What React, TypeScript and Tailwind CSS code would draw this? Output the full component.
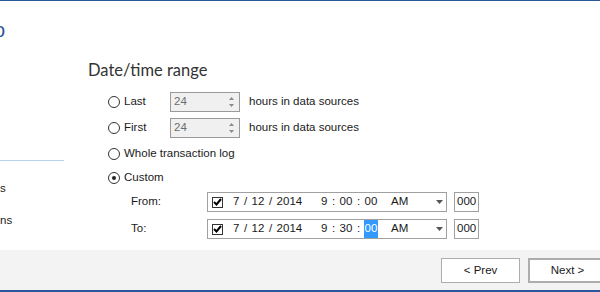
import React from "react";

const font = { fontFamily: '"Liberation Sans", Arial, sans-serif' };

function Radio({ checked, label, wide }: { checked?: boolean; label: string; wide?: boolean }) {
  return (
    <div className={wide ? "flex items-center" : "flex items-center w-[62px] shrink-0"}>
      <span className="w-[12px] h-[12px] shrink-0 rounded-full border border-[#333] bg-white flex items-center justify-center">
        {checked && <span className="w-[4px] h-[4px] rounded-full bg-[#222]" />}
      </span>
      <span className="ml-[4px] whitespace-nowrap">{label}</span>
    </div>
  );
}

function SpinBox() {
  return (
    <div className="flex w-[70px] h-[20px] shrink-0 border border-[#9a9a9a] bg-[#f0f0f0]">
      <div className="flex-1 pl-[3px] flex items-center text-[#6d6d6d]">24</div>
      <div className="w-[16px] flex flex-col items-center justify-center gap-[4px]">
        <svg width="5" height="3" viewBox="0 0 5 3">
          <path d="M0 3 L2.5 0 L5 3 Z" fill="#8a8a8a" />
        </svg>
        <svg width="5" height="3" viewBox="0 0 5 3">
          <path d="M0 0 L2.5 3 L5 0 Z" fill="#8a8a8a" />
        </svg>
      </div>
    </div>
  );
}

function DateTimeBox({ minutes, selected }: { minutes: string; selected?: boolean }) {
  return (
    <div className="flex items-center gap-[7px]">
      <div className="flex items-center w-[240px] h-[20px] border border-[#a0a0a0] bg-white">
        <span className="ml-[4px] w-[11px] h-[11px] border border-[#333] flex items-center justify-center">
          <svg width="9" height="8" viewBox="0 0 9 8">
            <path d="M1 4 L3.5 6.5 L8 1" stroke="#000" strokeWidth="2" fill="none" />
          </svg>
        </span>
        <div className="ml-[10px] flex gap-[4.5px] w-[88px]">
          <span>7</span>
          <span>/</span>
          <span>12</span>
          <span>/</span>
          <span>2014</span>
        </div>
        <div className="flex gap-[4.5px] w-[70px]">
          <span>9</span>
          <span>:</span>
          <span>{minutes}</span>
          <span>:</span>
          <span className={selected ? "bg-[#3399ff] text-white px-[1px] -mx-[1px]" : ""}>00</span>
        </div>
        <span className="w-[45px]">AM</span>
        <svg width="7" height="4" viewBox="0 0 7 4">
          <path d="M0 0 L3.5 4 L7 0 Z" fill="#555" />
        </svg>
      </div>
      <div className="w-[25px] h-[20px] border border-[#a0a0a0] bg-white flex items-center pl-[2px]">
        000
      </div>
    </div>
  );
}

export default function App() {
  return (
    <div
      className="w-[600px] h-[292px] bg-white flex flex-col overflow-hidden text-[11.5px] text-[#1a1a1a]"
      style={font}
    >
      <div className="h-[1px] bg-[#2b579a]" />
      <div className="flex flex-1">
        <div className="w-[64px] flex flex-col overflow-hidden">
          <div className="h-[160px] border-b border-[#b8d3ef] pt-[17px]">
            <span className="block -ml-[6px] text-[20px] leading-[24px] text-[#2b579a]">o</span>
          </div>
          <div className="mt-[12px] h-[32px] flex items-center">s</div>
          <div className="h-[32px] flex items-center">ns</div>
        </div>
        <div className="flex-1 pl-[24px] pt-[57px] flex flex-col">
          <div
            className="h-[24px] text-[16.5px] leading-[24px] text-[#333]"
            style={{ fontFamily: 'Lato, sans-serif' }}
          >
            Date/time range
          </div>
          <div className="pl-[20px] flex flex-col">
            <div className="mt-[10px] h-[20px] flex items-center">
              <Radio label="Last" />
              <SpinBox />
              <span className="ml-[9px]">hours in data sources</span>
            </div>
            <div className="mt-[6px] h-[20px] flex items-center">
              <Radio label="First" />
              <SpinBox />
              <span className="ml-[9px]">hours in data sources</span>
            </div>
            <div className="mt-[6px] h-[20px] flex items-center">
              <Radio wide label="Whole transaction log" />
            </div>
            <div className="mt-[4px] h-[20px] flex items-center">
              <Radio wide checked label="Custom" />
            </div>
            <div className="mt-[4px] h-[20px] flex items-center pl-[23px]">
              <span className="w-[76px]">From:</span>
              <DateTimeBox minutes="00" />
            </div>
            <div className="mt-[7px] h-[20px] flex items-center pl-[23px]">
              <span className="w-[76px]">To:</span>
              <DateTimeBox minutes="30" selected />
            </div>
          </div>
        </div>
      </div>
      <div className="h-[42px] bg-[#f3f3f3] border-b-2 border-[#2b579a] flex items-start pt-[8px] pl-[441px] gap-[8px]">
        <button className="w-[79px] h-[25px] shrink-0 bg-white border border-[#adadad]">&lt; Prev</button>
        <button className="w-[79px] h-[25px] shrink-0 bg-white border-2 border-[#adadad]">Next &gt;</button>
      </div>
    </div>
  );
}
